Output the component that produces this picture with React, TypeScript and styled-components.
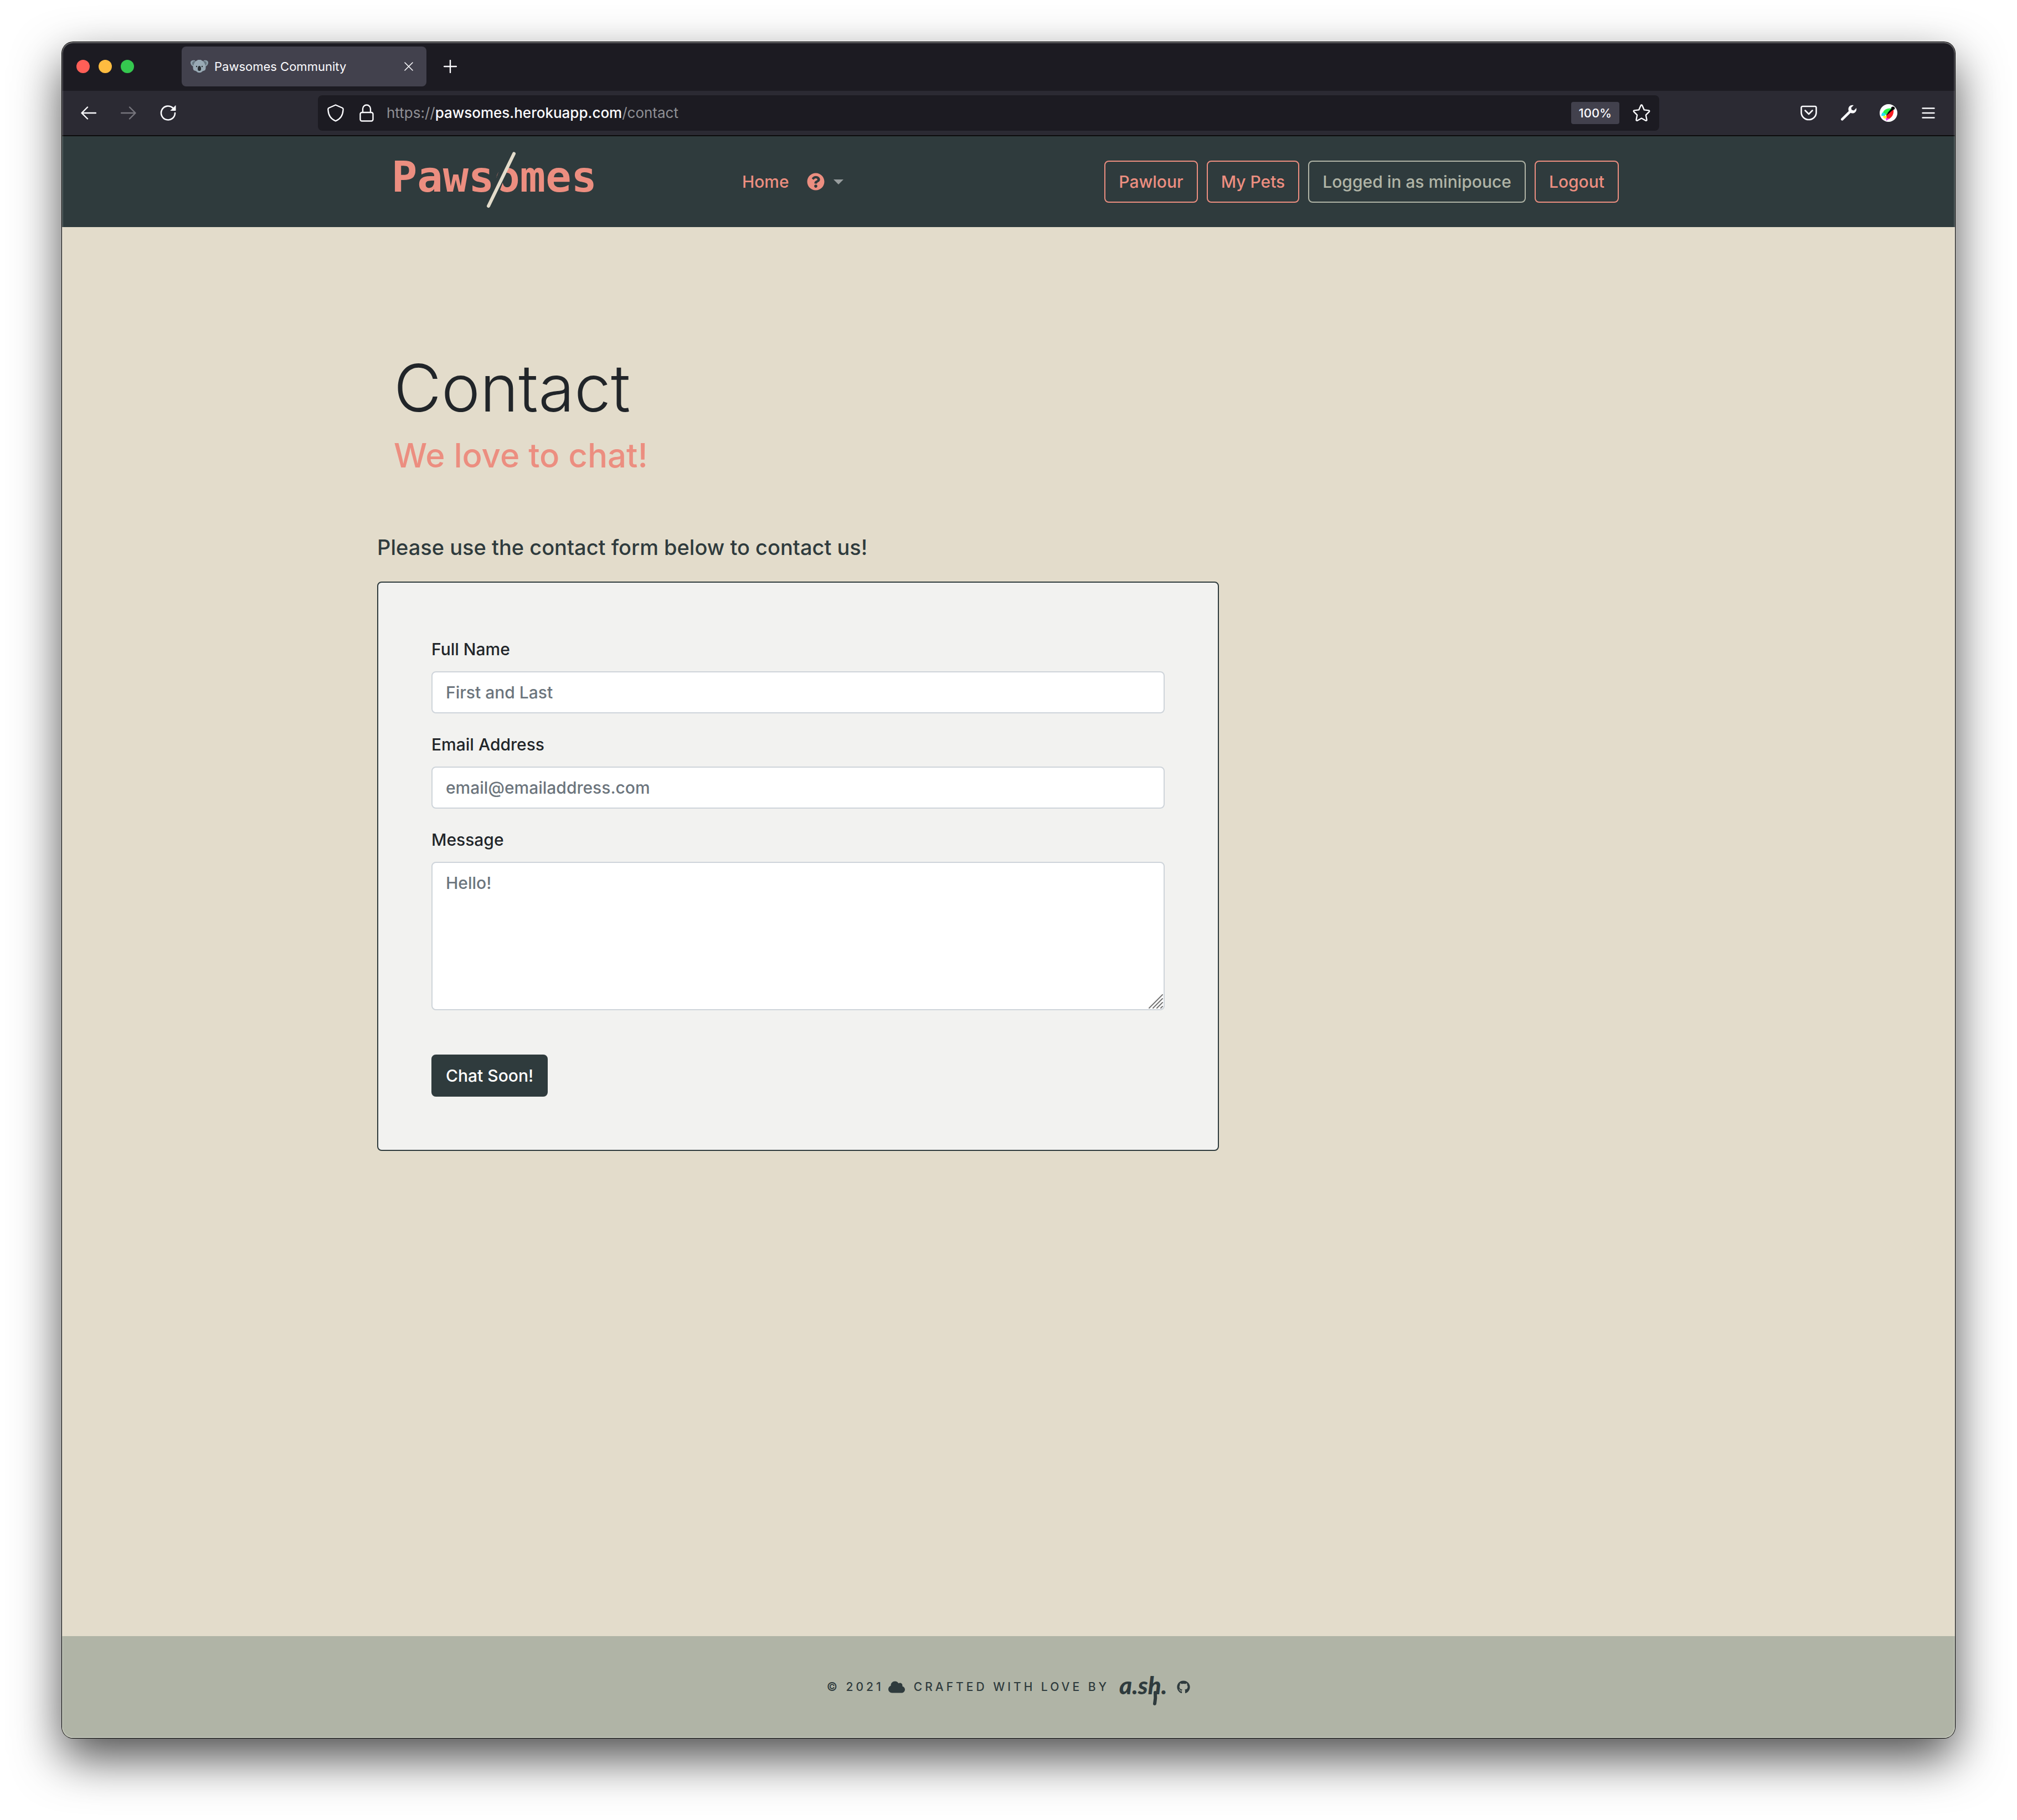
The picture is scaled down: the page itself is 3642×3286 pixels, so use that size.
import React from "react";
import styled, { createGlobalStyle } from "styled-components";
import { FaCloud, FaGithub, FaQuestionCircle } from "react-icons/fa";

const colors = {
  night: "#1c1b22",
  toolbar: "#2b2a33",
  tab: "#42414d",
  chromeText: "#fbfbfe",
  chromeMuted: "#8f8f94",
  pine: "#2f3b3d",
  coral: "#ec8e80",
  sage: "#b0b4a6",
  sand: "#e3dccb",
  ink: "#212529",
  paper: "#f2f2f0",
  inputBorder: "#ced4da",
  placeholder: "#6c757d",
};

const GlobalStyle = createGlobalStyle`
  *, *::before, *::after { box-sizing: border-box; }
  body {
    margin: 0;
    background: #ffffff;
    font-family: Inter, "Liberation Sans", sans-serif;
    font-weight: 500;
  }
  svg { display: block; flex: none; }
`;

const Desktop = styled.div`
  display: flex;
  min-height: 100vh;
  padding: 76px 112px 148px;
`;

const Window = styled.div`
  position: relative;
  display: flex;
  flex: 1;
  flex-direction: column;
  min-width: 0;
  overflow: hidden;
  border-radius: 20px;
  background: ${colors.sand};
  box-shadow: 0 0 0 1px #000000, 0 36px 86px rgba(0, 0, 0, 0.7);

  &::after {
    content: "";
    position: absolute;
    inset: 0;
    border-radius: 20px;
    box-shadow: inset 0 0 0 2px rgba(255, 255, 255, 0.2), inset 0 2px 0 rgba(255, 255, 255, 0.15);
    pointer-events: none;
  }
`;

const TabStrip = styled.header`
  display: flex;
  align-items: center;
  height: 88px;
  padding: 0 26px;
  background: ${colors.night};
`;

const TrafficLights = styled.div`
  display: flex;
  gap: 16px;
  margin-right: 86px;
`;

const TrafficLight = styled.span<{ $color: string }>`
  width: 24px;
  height: 24px;
  border-radius: 50%;
  background: ${({ $color }) => $color};
`;

const BrowserTab = styled.div`
  display: flex;
  align-items: center;
  width: 442px;
  height: 72px;
  padding: 0 16px;
  border-radius: 8px;
  background: ${colors.tab};
`;

const TabTitle = styled.span`
  flex: 1;
  margin-left: 11px;
  color: ${colors.chromeText};
  font-size: 22px;
  font-weight: 400;
  line-height: 32px;
`;

const ChromeButton = styled.button<{ $width: number }>`
  display: flex;
  align-items: center;
  justify-content: center;
  width: ${({ $width }) => $width}px;
  height: 64px;
  padding: 0;
  border: 0;
  background: none;
  color: ${colors.chromeText};

  &:disabled { color: #77767d; }
`;

const NewTab = styled(ChromeButton)`
  margin-left: 11px;
`;

const Toolbar = styled.div`
  display: flex;
  align-items: center;
  justify-content: space-between;
  height: 82px;
  padding: 0 16px;
  border-bottom: 2px solid #0c0c0d;
  background: ${colors.toolbar};
`;

const ToolGroup = styled.div`
  display: flex;
  gap: 8px;
`;

const AddressBar = styled.div`
  display: flex;
  align-items: center;
  flex: 0 1 2422px;
  height: 64px;
  padding: 0 16px;
  border-radius: 8px;
  background: ${colors.night};
`;

const SiteIcons = styled.div`
  display: flex;
  gap: 24px;
  margin-right: 20px;
`;

const Address = styled.span`
  flex: 1;
  color: ${colors.chromeMuted};
  font-size: 26px;
  font-weight: 400;
  line-height: 40px;
`;

const Host = styled.span`
  color: ${colors.chromeText};
  font-weight: 500;
`;

const ZoomLevel = styled.button`
  height: 40px;
  margin-right: 24px;
  padding: 0 14px;
  border: 0;
  border-radius: 4px;
  background: ${colors.tab};
  color: ${colors.chromeText};
  font: 500 22px/40px Inter, "Liberation Sans", sans-serif;
`;

const SiteHeader = styled.header`
  display: flex;
  height: 164px;
  background: ${colors.pine};
`;

const Container = styled.div`
  width: 100%;
  max-width: 2280px;
  margin: 0 auto;
`;

const NavRow = styled(Container)`
  display: flex;
  align-items: center;
  padding: 0 38px 0 26px;
`;

const Brand = styled.a`
  position: relative;
  height: 108px;
  color: ${colors.coral};
  font: 700 77px/92px "DejaVu Sans Mono", monospace;
  text-decoration: none;

  svg {
    position: absolute;
    top: 0;
    left: 164px;
  }
`;

const NavLinks = styled.nav`
  display: flex;
  align-items: center;
  gap: 32px;
  margin-left: 262px;
`;

const NavLink = styled.a`
  color: ${colors.coral};
  font-size: 30px;
  line-height: 48px;
  text-decoration: none;
`;

const HelpMenu = styled.button`
  display: flex;
  align-items: center;
  gap: 16px;
  padding: 0;
  border: 0;
  background: none;
  color: ${colors.coral};
`;

const Caret = styled.span`
  border: solid transparent;
  border-width: 9px 9px 0;
  border-top-color: #979d9e;
`;

const Account = styled.div`
  display: flex;
  gap: 16px;
  margin-left: auto;
`;

const OutlineLink = styled.a<{ $muted?: boolean }>`
  padding: 12px 24px;
  border: 2px solid;
  border-radius: 8px;
  color: ${({ $muted }) => ($muted ? colors.sage : colors.coral)};
  font-size: 30px;
  line-height: 48px;
  text-decoration: none;
  white-space: nowrap;
`;

const Main = styled.main`
  flex: 1;
  padding: 224px 0 128px;
`;

const Heading = styled.div`
  margin-bottom: 98px;
  padding: 0 30px;
`;

const Title = styled.h1`
  margin: 0 0 18px;
  color: ${colors.ink};
  font-size: 118px;
  font-weight: 300;
  line-height: 132px;
`;

const Subtitle = styled.h2`
  margin: 0;
  color: ${colors.coral};
  font-size: 60px;
  font-weight: 500;
  line-height: 76px;
`;

const Intro = styled.p`
  margin: 0 0 32px;
  color: ${colors.pine};
  font-size: 38px;
  line-height: 60px;
`;

const FormCard = styled.form`
  width: 100%;
  max-width: 1520px;
  padding: 96px;
  border: 2px solid ${colors.pine};
  border-radius: 8px;
  background: ${colors.paper};
`;

const Field = styled.div`
  position: relative;
  margin-bottom: 32px;
`;

const Label = styled.label`
  display: block;
  margin-bottom: 16px;
  color: ${colors.ink};
  font-size: 30px;
  line-height: 48px;
`;

const Input = styled.input`
  display: block;
  width: 100%;
  height: 76px;
  padding: 12px 24px;
  border: 2px solid ${colors.inputBorder};
  border-radius: 8px;
  background: #ffffff;
  color: ${colors.ink};
  font: 500 30px/48px Inter, "Liberation Sans", sans-serif;

  &::placeholder { color: ${colors.placeholder}; opacity: 1; }
`;

const TextArea = styled(Input)`
  height: 268px;
  resize: none;
`;

const ResizeGrip = styled.svg`
  position: absolute;
  right: 3px;
  bottom: 3px;
`;

const Submit = styled.button`
  margin-top: 48px;
  padding: 12px 24px;
  border: 2px solid ${colors.pine};
  border-radius: 8px;
  background: ${colors.pine};
  color: #ffffff;
  font: 500 30px/48px Inter, "Liberation Sans", sans-serif;
`;

const Footer = styled.footer`
  display: flex;
  align-items: center;
  justify-content: center;
  height: 184px;
  background: ${colors.sage};
  color: ${colors.pine};
  font-size: 21px;
  line-height: 32px;
  letter-spacing: 5px;
  text-transform: uppercase;
`;

const Credit = styled.span`
  margin: 0 18px 0 16px;
`;

const Year = styled.span`
  margin-right: 8px;
`;

const Signature = styled.a`
  position: relative;
  margin: 0 18px 8px 0;
  color: ${colors.pine};
  font: italic 900 44px/48px Lato, "Liberation Sans", sans-serif;
  letter-spacing: normal;
  text-decoration: none;
  text-transform: none;

  svg {
    position: absolute;
    top: 0;
    left: 0;
  }
`;

const FooterLink = styled.a`
  color: ${colors.pine};
`;

const stroke = { fill: "none", stroke: "currentColor", strokeWidth: 2, strokeLinecap: "round", strokeLinejoin: "round" } as const;

const Koala = () => (
  <svg width="32" height="24" viewBox="0 0 32 24" aria-hidden="true">
    <path d="M8 1C3 0 0 2 0 5c0 3 2 6 5 7l5-6zM24 1c5-1 8 1 8 4 0 3-2 6-5 7l-5-6z" fill="#8ea0ab" />
    <path d="M8 2C5 2 3 4 3 6c0 2 1 4 3 5l4-6zM24 2c3 0 5 2 5 4 0 2-1 4-3 5l-4-6z" fill="#66757f" />
    <path d="M12 1c2-2 6-2 8 0 3 1 5 4 6 7 2 4 2 8 0 11-2 1-4 1-5 2-2 3-8 3-10 0-1-1-3-1-5-2-2-3-2-7 0-11 1-3 3-6 6-7z" fill="#99aab5" />
    <path d="M16 11c2 0 3 2 3 5s-1 4-3 4-3-1-3-4 1-5 3-5z" fill="#292f33" />
    <circle cx="11" cy="12" r="1.2" fill="#292f33" />
    <circle cx="21" cy="12" r="1.2" fill="#292f33" />
  </svg>
);

const CloseIcon = () => (
  <svg width="16" height="16" viewBox="0 0 16 16" {...stroke} strokeWidth={1.6}><path d="M1 1l14 14M15 1L1 15" /></svg>
);

const PlusIcon = () => (
  <svg width="24" height="24" viewBox="0 0 24 24" {...stroke} strokeWidth={2.4}><path d="M12 1v22M1 12h22" /></svg>
);

const BackIcon = () => (
  <svg width="28" height="24" viewBox="0 0 28 24" {...stroke} strokeWidth={2.4}><path d="M27 12H2M12 1.500L1.500 12 12 22.500" /></svg>
);

const ForwardIcon = () => (
  <svg width="28" height="24" viewBox="0 0 28 24" {...stroke} strokeWidth={2.4}><path d="M1 12h25M16 1.500L26.500 12 16 22.500" /></svg>
);

const ReloadIcon = () => (
  <svg width="30" height="30" viewBox="0 0 30 30" {...stroke} strokeWidth={2.6}>
    <path d="M27 15a12.500 12.500 0 1 1-4-9.200" />
    <path d="M28 2v8.500h-8.500z" fill="currentColor" strokeWidth={1} />
  </svg>
);

const ShieldIcon = () => (
  <svg width="30" height="32" viewBox="0 0 30 32" {...stroke} strokeWidth={2.4}>
    <path d="M15 1.500L27.500 7c1.500.7 1.300 2 1 4-.6 10-5 16-13.500 19.500C6.500 27 2.100 21 1.500 11c-.3-2-.5-3.300 1-4z" />
  </svg>
);

const LockIcon = () => (
  <svg width="26" height="32" viewBox="0 0 26 32" {...stroke} strokeWidth={2.4}>
    <rect x="1.500" y="15" width="23" height="15.500" rx="3" />
    <path d="M6 15V8.500a7 7 0 0 1 14 0V15" />
  </svg>
);

const StarIcon = () => (
  <svg width="32" height="32" viewBox="0 0 32 32" {...stroke} strokeWidth={2.4}>
    <path d="M14.700 2.400q1.300-1.800 2.600 0l3.500 8 8.200 1q2 .5.900 2.300l-6 6 1.600 8.600q.1 2-1.900 1.500L16 25.500l-7.600 4.300q-2 .5-1.900-1.500l1.600-8.600-6-6q-1.100-1.800.9-2.300l8.200-1z" />
  </svg>
);

const PocketIcon = () => (
  <svg width="30" height="28" viewBox="0 0 30 28" {...stroke} strokeWidth={2.6}>
    <path d="M4 2h22q2.500 0 2.500 2.500V13a13.500 13 0 0 1-27 0V4.500Q1.500 2 4 2z" />
    <path d="M8.500 9.500L15 16l6.500-6.500" />
  </svg>
);

const WrenchIcon = () => (
  <svg width="30" height="30" viewBox="0 0 30 30" aria-hidden="true">
    <path d="M24 1c-5-1.500-9.500 2-9.500 7 0 1.500.2 2.500.7 3.500L1.500 25c-1.800 2 1.200 5 3.200 3.200L18.500 14.700c1 .5 2 .8 3.500.8 5 0 8-4.500 7-9.500l-4.500 4.500-4-1-1-4z" fill="currentColor" />
  </svg>
);

const PaletteIcon = () => (
  <svg width="32" height="32" viewBox="0 0 32 32" aria-hidden="true">
    <circle cx="16" cy="16" r="16" fill="#ffffff" />
    <path d="M24 8C14 6 7 10 6 16l6 4 9-7z" fill="#2bf24a" />
    <path d="M5 15c-1 2-2 4-2 6l6 1 2-5z" fill="#22e6ef" />
    <path d="M6 21h7v5H8q-2-2-2-5z" fill="#fff23a" />
    <path d="M25 9c1 8-2 15-9 18l-3-1-1-7z" fill="#f81c22" />
    <path d="M11 25l7 1-6 4z" fill="#f32cf0" />
    <path d="M21 8c-1-3 3-5 6-2 1 2 0 4-2 4l-4 3-9 8 3-6z" fill="#050505" />
  </svg>
);

const MenuIcon = () => (
  <svg width="24" height="20" viewBox="0 0 24 20" {...stroke} strokeWidth={2.4}><path d="M1.500 1.500h21M1.500 10h21M1.500 18.500h21" /></svg>
);

export default function App() {
  return (
    <>
      <GlobalStyle />
      <Desktop>
        <Window>
          <TabStrip>
            <TrafficLights>
              <TrafficLight $color="#ff5f57" />
              <TrafficLight $color="#febc40" />
              <TrafficLight $color="#35c84f" />
            </TrafficLights>
            <BrowserTab>
              <Koala />
              <TabTitle>Pawsomes Community</TabTitle>
              <ChromeButton $width={32} aria-label="Close tab"><CloseIcon /></ChromeButton>
            </BrowserTab>
            <NewTab $width={64} aria-label="New tab"><PlusIcon /></NewTab>
          </TabStrip>

          <Toolbar>
            <ToolGroup>
              <ChromeButton $width={64} aria-label="Back"><BackIcon /></ChromeButton>
              <ChromeButton $width={64} aria-label="Forward" disabled><ForwardIcon /></ChromeButton>
              <ChromeButton $width={64} aria-label="Reload"><ReloadIcon /></ChromeButton>
            </ToolGroup>
            <AddressBar>
              <SiteIcons>
                <ChromeButton $width={32} aria-label="Tracking protection"><ShieldIcon /></ChromeButton>
                <ChromeButton $width={32} aria-label="Connection secure"><LockIcon /></ChromeButton>
              </SiteIcons>
              <Address>https://<Host>pawsomes.herokuapp.com</Host>/contact</Address>
              <ZoomLevel>100%</ZoomLevel>
              <ChromeButton $width={32} aria-label="Bookmark"><StarIcon /></ChromeButton>
            </AddressBar>
            <ToolGroup>
              <ChromeButton $width={64} aria-label="Save to Pocket"><PocketIcon /></ChromeButton>
              <ChromeButton $width={64} aria-label="Developer tools"><WrenchIcon /></ChromeButton>
              <ChromeButton $width={64} aria-label="Colour picker"><PaletteIcon /></ChromeButton>
              <ChromeButton $width={64} aria-label="Menu"><MenuIcon /></ChromeButton>
            </ToolGroup>
          </Toolbar>

          <SiteHeader>
            <NavRow>
              <Brand href="#home">
                Pawsomes
                <svg width="70" height="102" viewBox="0 0 70 102" aria-hidden="true">
                  <path d="M48 6L24 70l-4 20" stroke={colors.pine} strokeWidth="14" fill="none" />
                  <path d="M57 3.500L11 98" stroke={colors.sand} strokeWidth="6" strokeLinecap="round" />
                </svg>
              </Brand>
              <NavLinks>
                <NavLink href="#home">Home</NavLink>
                <HelpMenu aria-label="Help">
                  <FaQuestionCircle size={32} />
                  <Caret />
                </HelpMenu>
              </NavLinks>
              <Account>
                <OutlineLink href="#pawlour">Pawlour</OutlineLink>
                <OutlineLink href="#pets">My Pets</OutlineLink>
                <OutlineLink href="#profile" $muted>Logged in as minipouce</OutlineLink>
                <OutlineLink href="#logout">Logout</OutlineLink>
              </Account>
            </NavRow>
          </SiteHeader>

          <Main>
            <Container>
              <Heading>
                <Title>Contact</Title>
                <Subtitle>We love to chat!</Subtitle>
              </Heading>
              <Intro>Please use the contact form below to contact us!</Intro>
              <FormCard>
                <Field>
                  <Label htmlFor="name">Full Name</Label>
                  <Input id="name" type="text" placeholder="First and Last" />
                </Field>
                <Field>
                  <Label htmlFor="email">Email Address</Label>
                  <Input id="email" type="email" placeholder="email@emailaddress.com" />
                </Field>
                <Field>
                  <Label htmlFor="message">Message</Label>
                  <TextArea as="textarea" id="message" placeholder="Hello!" />
                  <ResizeGrip width="26" height="26" viewBox="0 0 26 26" aria-hidden="true">
                    <path d="M1 25L25 1M8 25L25 8M15 25l10-10M22 25l3-3" stroke="#757575" strokeWidth="2" strokeLinecap="round" />
                  </ResizeGrip>
                </Field>
                <Submit type="button">Chat Soon!</Submit>
              </FormCard>
            </Container>
          </Main>

          <Footer>
            <Year>© 2021</Year>
            <FaCloud size={30} />
            <Credit>Crafted with love by</Credit>
            <Signature href="#ash">
              a.sh.
              <svg width="84" height="72" viewBox="0 0 84 72" aria-hidden="true">
                <path d="M65 38q1 10-1 20" fill="none" stroke="currentColor" strokeWidth="6" strokeLinecap="round" />
              </svg>
            </Signature>
            <FooterLink href="#github" aria-label="GitHub"><FaGithub size={24} /></FooterLink>
          </Footer>
        </Window>
      </Desktop>
    </>
  );
}
